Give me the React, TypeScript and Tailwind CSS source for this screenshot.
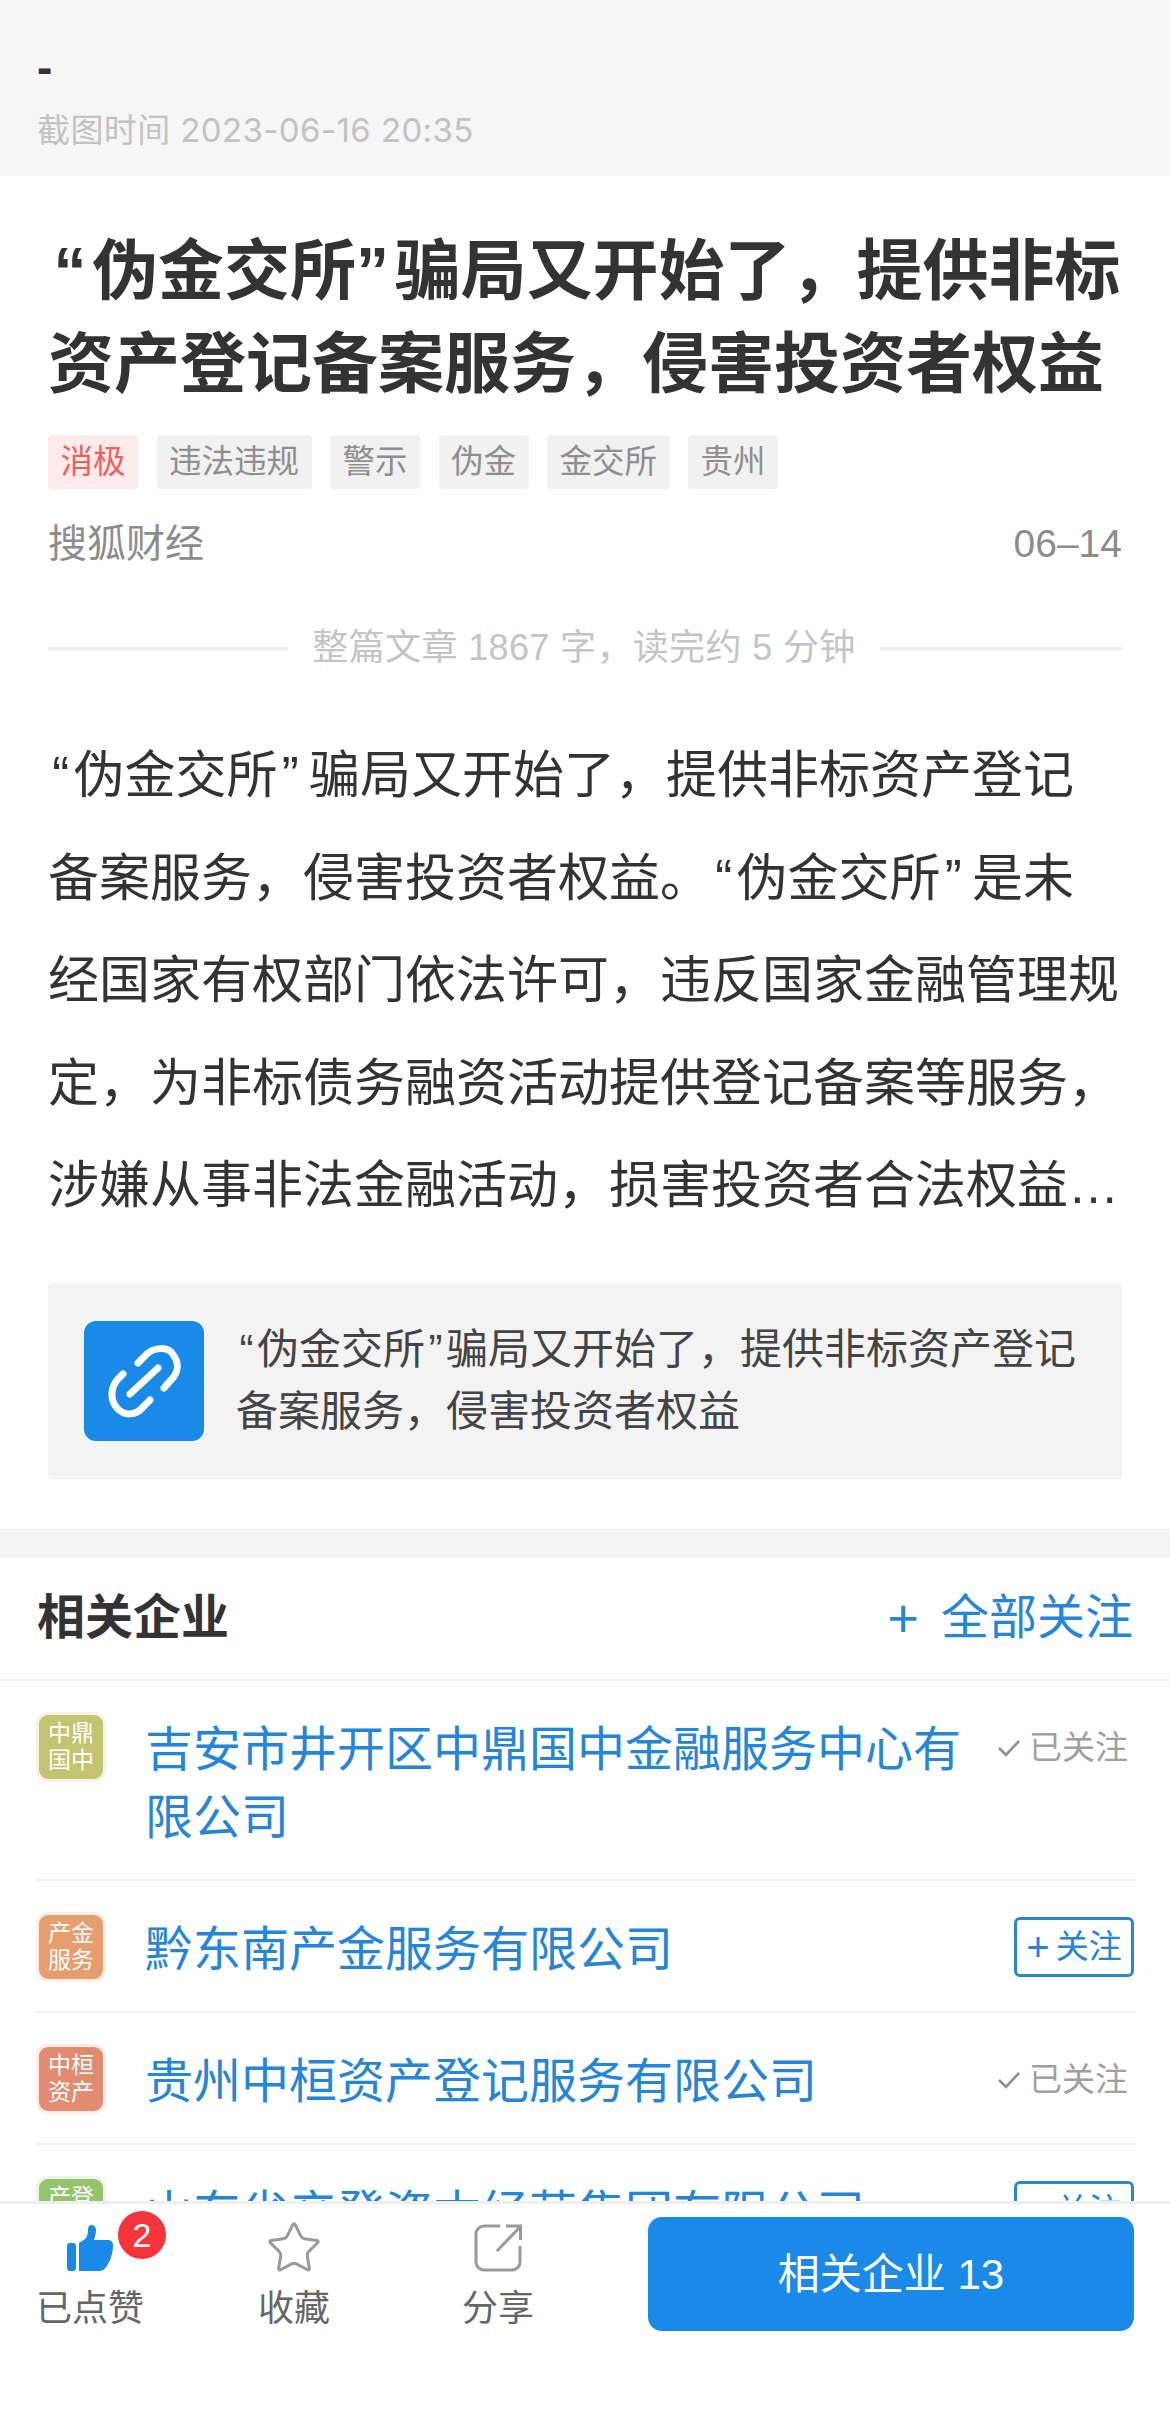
import React from "react";
import { Star } from "lucide-react";

const tags = [
  { label: "消极", red: true },
  { label: "违法违规" },
  { label: "警示" },
  { label: "伪金" },
  { label: "金交所" },
  { label: "贵州" },
];

const companies = [
  { id: "c1", logo: ["中鼎", "国中"], logoClass: "bg-[#c3c46f] border-[#f5f4e4]", name: "吉安市井开区中鼎国中金融服务中心有限公司", followed: true },
  { id: "c2", logo: ["产金", "服务"], logoClass: "bg-[#e89d6e] border-[#fbf0e8]", name: "黔东南产金服务有限公司", followed: false },
  { id: "c3", logo: ["中桓", "资产"], logoClass: "bg-[#e38b70] border-[#fbede8]", name: "贵州中桓资产登记服务有限公司", followed: true },
  { id: "c4", logo: ["产登", "资本"], logoClass: "bg-[#93c46c] border-[#edf6e6]", name: "山东省产登资本经营集团有限公司", followed: false },
];

// hair and thin spaces: PingFang's curly quotes take more room than Liberation's
const titleText = "\u200a“\u200a伪金交所”\u200a骗局又开始了，提供非标资产登记备案服务，侵害投资者权益";
const linkText = "\u200a“\u200a伪金交所\u200a”\u200a骗局又开始了，提供非标资产登记备案服务，侵害投资者权益";
const bodyText =
  "\u200a“\u200a伪金交所\u200a”\u2009骗局又开始了，提供非标资产登记备案服务，侵害投资者权益。\u200a“\u200a伪金交所\u200a”\u2009是未经国家有权部门依法许可，违反国家金融管理规定，为非标债务融资活动提供登记备案等服务，涉嫌从事非法金融活动，损害投资者合法权益…";

function Check() {
  return (
    <svg width="22" height="18" viewBox="0 0 22 18" fill="none" stroke="#8f8f8f" strokeWidth="2.6" className="mr-[9px]">
      <path d="M1 9l7 7L21 2" />
    </svg>
  );
}

function Company({ item }: { item: (typeof companies)[number] }) {
  return (
    <div className="flex items-start pt-[31px] pb-[27px] border-b-2 border-[#f1f1f1]">
      <div className={`w-[70px] h-[70px] shrink-0 rounded-[12px] border-[3px] flex flex-col items-center justify-center text-white text-[23px] leading-[27px] ${item.logoClass}`}>
        {item.logo.map((l) => (
          <span key={l}>{l}</span>
        ))}
      </div>
      <div className="ml-[39px] mt-[4px] w-[840px] text-[48px] leading-[68px] text-[#2585d8]">{item.name}</div>
      {item.followed ? (
        <div className="ml-auto pr-[8px] h-[72px] flex items-center text-[33px] text-[#a0a0a0]">
          <Check />
          <span>已关注</span>
        </div>
      ) : (
        <div className="ml-auto mr-[2px] mt-[5px] w-[120px] h-[60px] flex items-center justify-center rounded-[6px] border-[3px] border-[#2a87cf] text-[33px] text-[#2585d8]">
          <span className="mr-[6px] text-[40px] leading-[40px]">+</span>
          <span>关注</span>
        </div>
      )}
    </div>
  );
}

export default function App() {
  return (
    <div className="relative h-[2436px] overflow-hidden bg-white font-['Liberation_Sans','Noto_Sans_CJK_SC',sans-serif]">
      <div className="h-[176px] bg-[#f6f6f6] px-[37px] pt-[44px]">
        <div className="text-[46px] leading-[46px] font-bold text-[#333333]">-</div>
        <div className="mt-[17px] text-[33px] leading-[46px] tracking-[0.012em] text-[#c2c2c2] font-['Inter','Noto_Sans_CJK_SC',sans-serif]">
          截图时间 2023-06-16 20:35
        </div>
      </div>

      <div className="px-[48px] pt-[49px] pb-[50px]">
        <h1 className="text-[66px] leading-[93px] font-bold text-[#333333]">{titleText}</h1>

        <div className="mt-[24px] flex gap-[18.500px]">
          {tags.map((t) => (
            <span
              key={t.label}
              className={`h-[54px] px-[12.500px] rounded-[4px] flex items-center text-[32.500px] ${
                t.red ? "bg-[#fdeaea] text-[#ee5f5f]" : "bg-[#f1f1f1] text-[#8e8e8e]"
              }`}
            >
              {t.label}
            </span>
          ))}
        </div>

        <div className="mt-[28px] flex justify-between items-center h-[54px] text-[39px] text-[#8c8c8c]">
          <span>搜狐财经</span>
          <span>06–14</span>
        </div>

        <div className="mt-[50px] flex items-center h-[54px] text-[36px] text-[#c4c4c4]">
          <div className="w-[240px] h-[3px] bg-[#eeeeee]"></div>
          <span className="flex-1 text-center tracking-[0.01em]">整篇文章 1867 字，读完约 5 分钟</span>
          <div className="w-[242px] h-[3px] bg-[#eeeeee]"></div>
        </div>

        <p className="mt-[50px] pr-[2px] text-[51px] leading-[102.500px] text-[#333333]">{bodyText}</p>

        <div className="mt-[45px] h-[196px] rounded-[4px] bg-[#f3f3f3] pl-[36px] pr-[30px] flex items-center">
          <div className="w-[120px] h-[120px] shrink-0 rounded-[12px] bg-[#1a8ae8] flex items-center justify-center">
            <svg width="120" height="120" viewBox="0 0 120 120" fill="none" stroke="#ffffff" strokeWidth="7" strokeLinecap="round">
              <path d="M54 42l6-6c9-11 25-11 30-1 6 9 3 18-3 24l-7 8" />
              <path d="M39 53l-5 5c-8 9-8 21-1 29 7 8 19 8 26-1l7-7" />
              <path d="M46 73l28-26" />
            </svg>
          </div>
          <div className="ml-[32px] text-[42px] leading-[62px] text-[#444444]">{linkText}</div>
        </div>
      </div>

      <div className="h-[29px] bg-[#f3f3f3]"></div>

      <div className="h-[123px] px-[37px] flex items-center justify-between border-b-2 border-[#f1f1f1]">
        <span className="text-[48px] font-bold text-[#333333]">相关企业</span>
        <span className="text-[48px] text-[#2585d8] flex items-center">
          <span className="mr-[22px] text-[54px] leading-[54px]">+</span>
          <span>全部关注</span>
        </span>
      </div>

      <div className="pl-[36px] pr-[34px]">
        {companies.map((c) => (
          <Company key={c.id} item={c} />
        ))}
      </div>

      {/* fixed bottom bar, covers the last row */}
      <div className="absolute left-0 right-0 bottom-0 h-[235px] bg-white border-t-[3px] border-[#efefef] flex items-start gap-[24px]">
        <div className="relative w-[180px] pt-[20px] flex flex-col items-center">
          <svg width="46" height="46" viewBox="0 0 46 46" fill="#1a8ae8" className="my-[1px]">
            <rect x="0" y="18" width="9" height="28" rx="3" />
            <path d="M12 18l6-4c2-2 3-5 3-9 0-3 1-5 3.500-5S29 2 29 5c0 3-1 7-2 10h13c4 0 6 2 6 5 0 9-3 17-7 22-2 3-4 4-7 4H12z" />
          </svg>
          <span className="absolute left-[118px] top-[7px] w-[48px] h-[48px] rounded-full bg-[#f5353b] flex items-center justify-center text-[34px] text-white">2</span>
          <span className="mt-[14px] text-[36px] leading-[46px] text-[#666666]">已点赞</span>
        </div>
        <div className="w-[180px] pt-[20px] flex flex-col items-center">
          <Star size={58} strokeWidth={1.25} color="#9a9a9a" className="-m-[5px]" />
          <span className="mt-[14px] text-[36px] leading-[46px] text-[#666666]">收藏</span>
        </div>
        <div className="w-[180px] pt-[20px] flex flex-col items-center">
          <svg width="48" height="48" viewBox="0 0 48 48" fill="none" stroke="#9a9a9a" strokeWidth="3">
            <path d="M26 2H10a8 8 0 0 0-8 8v28a8 8 0 0 0 8 8h28a8 8 0 0 0 8-8V22" />
            <path d="M23 27L46 3M32 2h14.500v14" />
          </svg>
          <span className="mt-[14px] text-[36px] leading-[46px] text-[#666666]">分享</span>
        </div>
        <div className="ml-[36px] mt-[13px] w-[486px] h-[114px] rounded-[14px] bg-[#1a8ae8] flex items-center justify-center text-[42px] text-white">
          相关企业 13
        </div>
      </div>
    </div>
  );
}
